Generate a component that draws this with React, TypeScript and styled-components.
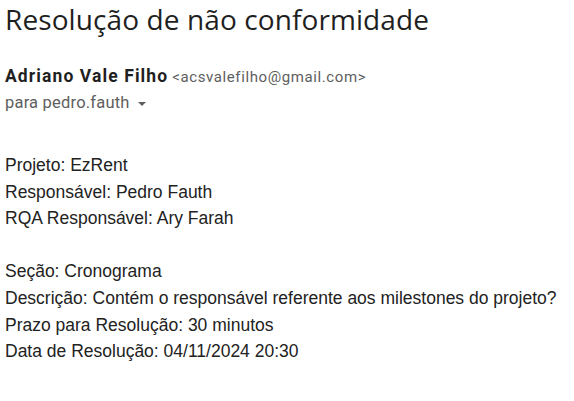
import React from "react";
import styled, { createGlobalStyle } from "styled-components";

const Global = createGlobalStyle`
  html, body { margin: 0; padding: 0; background: #ffffff; }
`;

const Page = styled.div`
  padding: 0 0 0 5px;
  display: flex;
  flex-direction: column;
`;

const Title = styled.h1`
  margin: 0;
  font-family: "Open Sans", sans-serif;
  font-weight: 400;
  font-size: 28px;
  line-height: 38px;
  color: #1f1f1f;
  letter-spacing: 0.1px;
`;

const Header = styled.div`
  margin-top: 27px;
  display: flex;
  flex-direction: column;
  gap: 4px;
`;

const SenderLine = styled.div`
  font-family: Roboto, sans-serif;
  font-size: 17.5px;
  line-height: 22px;
  color: #1f1f1f;
`;

const SenderName = styled.span`
  font-weight: 700;
  letter-spacing: 1.1px;
`;

const SenderEmail = styled.span`
  font-size: 15px;
  letter-spacing: 0.6px;
  color: #5e5e5e;
  margin-left: 4px;
`;

const Recipient = styled.div`
  display: flex;
  align-items: center;
  gap: 8px;
  font-family: Roboto, sans-serif;
  font-size: 16.5px;
  letter-spacing: 0.2px;
  line-height: 22px;
  color: #5e5e5e;
`;

const Caret = styled.span`
  width: 0;
  height: 0;
  border-left: 4px solid transparent;
  border-right: 4px solid transparent;
  border-top: 4px solid #5e5e5e;
  margin-top: 2px;
`;

const Body = styled.div`
  margin-top: 38px;
  font-family: "Liberation Sans", Arial, sans-serif;
  font-size: 17.5px;
  line-height: 26.6px;
  color: #222222;
`;

const Line = styled.div`
  min-height: 26.6px;
`;

const lines = [
  "Projeto: EzRent",
  "Responsável: Pedro Fauth",
  "RQA Responsável: Ary Farah",
  "",
  "Seção: Cronograma",
  "Descrição: Contém o responsável referente aos milestones do projeto?",
  "Prazo para Resolução: 30 minutos",
  "Data de Resolução: 04/11/2024 20:30",
];

export default function App() {
  return (
    <>
      <Global />
      <Page>
        <Title>Resolução de não conformidade</Title>
        <Header>
          <SenderLine>
            <SenderName>Adriano Vale Filho</SenderName>
            <SenderEmail>&lt;acsvalefilho@gmail.com&gt;</SenderEmail>
          </SenderLine>
          <Recipient>
            para pedro.fauth
            <Caret />
          </Recipient>
        </Header>
        <Body>
          {lines.map((l, i) => (
            <Line key={i}>{l}</Line>
          ))}
        </Body>
      </Page>
    </>
  );
}
